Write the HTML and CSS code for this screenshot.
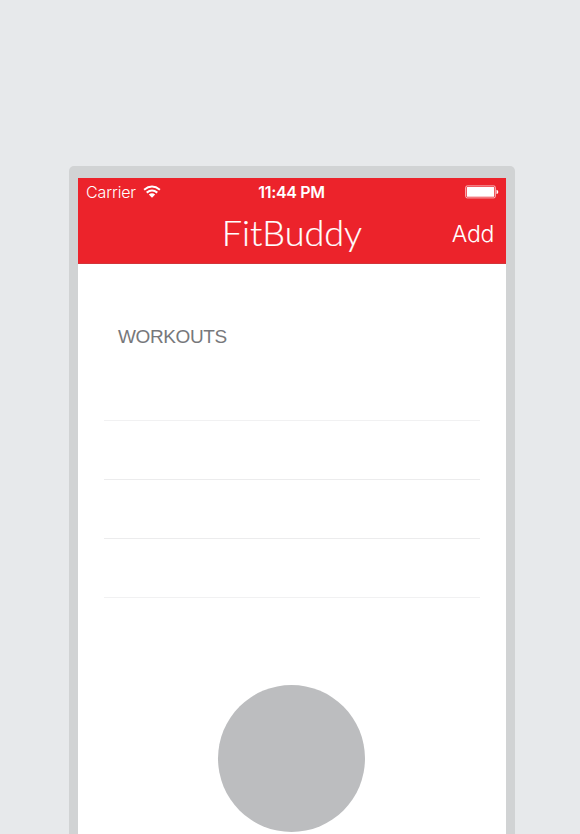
FILE: index.html
```html
<!DOCTYPE html>
<html lang="en">
<head>
<meta charset="utf-8">
<title>FitBuddy</title>
<link rel="stylesheet" href="styles.css">
</head>
<body>
<main class="phone">
  <div class="screen">
    <header class="header">
      <div class="status">
        <div class="carrier"><span class="carrier-name">Carrier</span>
          <svg class="wifi" width="18" height="14" viewBox="0 0 18 14" fill="none" stroke="#fff" stroke-width="2">
            <path d="M1.1 4.7Q9-1.7 16.9 4.7M3.7 7.6Q9 3.3 14.3 7.6"/>
            <path d="M5.8 9.5Q9 7.2 12.2 9.5L9 12.8Z" fill="#fff" stroke="none"/>
          </svg>
        </div>
        <span class="time">11:44 PM</span>
        <svg class="battery" width="34" height="14" viewBox="0 0 34 14">
          <rect x=".6" y=".9" width="29.8" height="12" rx="1.6" fill="none" stroke="#fff" stroke-opacity=".65"/>
          <rect x="1.8" y="2" width="27.4" height="9.8" rx=".6" fill="#fff"/>
          <path d="M31.5 4.8Q33.3 5.2 33.3 6.9T31.5 9Z" fill="#fff"/>
        </svg>
      </div>
      <nav class="nav">
        <h1 class="title">FitBuddy</h1>
        <a class="add">Add</a>
      </nav>
    </header>
    <h2 class="section">WORKOUTS</h2>
    <ul class="rows"><li></li><li></li><li></li><li></li></ul>
    <div class="circle"></div>
  </div>
</main>
</body>
</html>
```
FILE: styles.css
```css
* { box-sizing: border-box; margin: 0; padding: 0; }
html { height: 834px; overflow: hidden; background: #e7e9eb; }
body {
  height: 834px;
  overflow: hidden;
  padding: 166px 65px 0 69px;
  font-family: "Liberation Sans", Arial, sans-serif;
}
.phone {
  height: 668px;
  padding: 12px 9px 0;
  border-radius: 5px 5px 0 0;
  background: #d1d3d4;
}
.screen { height: 656px; background: #fff; }
.header { height: 86px; background: #ec232b; color: #fff; border-bottom: 1px solid #d3343a; }
.status {
  display: grid;
  grid-template-columns: 1fr auto 1fr;
  align-items: center;
  height: 28px;
  padding: 0 7px 0 8px;
}
.carrier { display: flex; align-items: center; gap: 7px; }
.carrier-name { font: 300 16px/28px Inter, sans-serif; letter-spacing: -.15px; }
.time { font: 600 16px/28px Inter, sans-serif; letter-spacing: -.35px; margin-right: 2px; }
.wifi { display: block; }
.battery { display: block; justify-self: end; }
.nav {
  display: grid;
  grid-template-columns: 1fr auto 1fr;
  height: 57px;
  padding: 0 12px;
}
.title {
  grid-column: 2;
  font: 300 36px/52px Lato, sans-serif;
  -webkit-text-stroke: .2px #fff;
}
.add { justify-self: end; font: 300 23px/57px Inter, sans-serif; letter-spacing: -.3px; }
.section {
  padding: 59px 0 0 40px;
  height: 98px;
  font-size: 19px;
  line-height: 28px;
  font-weight: 400;
  letter-spacing: -.4px;
  color: #77787b;
}
.rows { list-style: none; margin: 0 26px; }
.rows li { height: 59px; border-bottom: 1px solid #ececed; }
.rows li:first-child, .rows li:last-child { border-color: #f1f1f2; }
.circle {
  width: 147px;
  height: 147px;
  margin: 87px 0 0 140px;
  border-radius: 50%;
  background: #bcbdbf;
}
```
